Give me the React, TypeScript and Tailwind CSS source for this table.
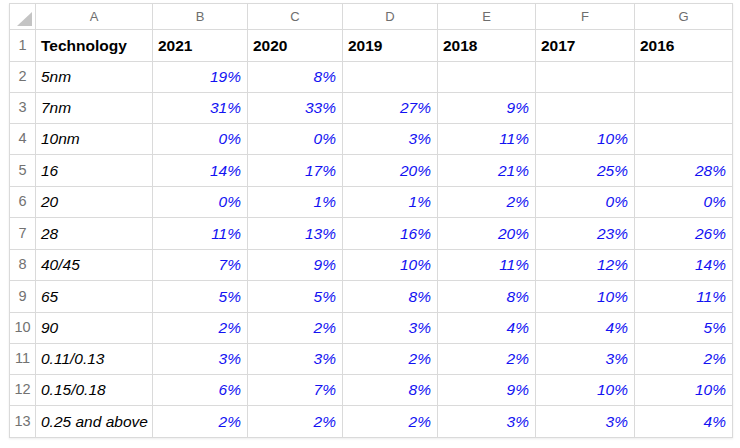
const cols = [
  { key: "A", w: "w-[117px]" },
  { key: "B", w: "w-[95px]" },
  { key: "C", w: "w-[95px]" },
  { key: "D", w: "w-[95px]" },
  { key: "E", w: "w-[98px]" },
  { key: "F", w: "w-[99px]" },
  { key: "G", w: "w-[98px]" },
];

const years = ["2021", "2020", "2019", "2018", "2017", "2016"];

const rows: [string, (number | null)[]][] = [
  ["5nm", [19, 8, null, null, null, null]],
  ["7nm", [31, 33, 27, 9, null, null]],
  ["10nm", [0, 0, 3, 11, 10, null]],
  ["16", [14, 17, 20, 21, 25, 28]],
  ["20", [0, 1, 1, 2, 0, 0]],
  ["28", [11, 13, 16, 20, 23, 26]],
  ["40/45", [7, 9, 10, 11, 12, 14]],
  ["65", [5, 5, 8, 8, 10, 11]],
  ["90", [2, 2, 3, 4, 4, 5]],
  ["0.11/0.13", [3, 3, 2, 2, 3, 2]],
  ["0.15/0.18", [6, 7, 8, 9, 10, 10]],
  ["0.25 and above", [2, 2, 2, 3, 3, 4]],
];

// row heights incl. bottom border, row 1 first
const heights = [
  "h-[32px]",
  "h-[31px]",
  "h-[31px]",
  "h-[31px]",
  "h-[32px]",
  "h-[31px]",
  "h-[32px]",
  "h-[31px]",
  "h-[32px]",
  "h-[31px]",
  "h-[31px]",
  "h-[31px]",
  "h-[32px]",
];

const cell = "border-r border-b border-[#dadada] flex items-center shrink-0 whitespace-nowrap";

function RowNum({ n, h }: { n: number; h: string }) {
  return (
    <div className={`${cell} ${h} w-[26px] justify-center text-[14.5px] text-[#727272]`}>
      {n}
    </div>
  );
}

export default function App() {
  return (
    <div
      className="w-[740px] h-[448px] bg-white pt-[3px] pl-[9px]"
      style={{ fontFamily: '"Liberation Sans", Arial, sans-serif' }}
    >
      <div className="w-fit border-t border-l border-[#dadada] shadow-[0_1px_2px_rgba(0,0,0,0.08)]">
        <div className="flex">
          <div className={`${cell} h-[26px] w-[26px] justify-end items-end pr-[3px] pb-[3px]`}>
            <svg width="15" height="14" viewBox="0 0 15 14">
              <polygon points="15,0 15,14 0,14" fill="#c4c4c4" />
            </svg>
          </div>
          {cols.map((c) => (
            <div
              key={c.key}
              className={`${cell} h-[26px] ${c.w} justify-center text-[13px] text-[#6e6e6e]`}
            >
              {c.key}
            </div>
          ))}
        </div>
        <div className="flex">
          <RowNum n={1} h={heights[0]} />
          <div className={`${cell} ${heights[0]} w-[117px] px-[5px] text-[15.5px] font-bold text-black`}>
            Technology
          </div>
          {years.map((y, i) => (
            <div
              key={y}
              className={`${cell} ${heights[0]} ${cols[i + 1].w} px-[5px] text-[15.5px] font-bold text-black`}
            >
              {y}
            </div>
          ))}
        </div>
        {rows.map(([label, vals], r) => (
          <div key={label} className="flex">
            <RowNum n={r + 2} h={heights[r + 1]} />
            <div className={`${cell} ${heights[r + 1]} w-[117px] pl-[5px] text-[15.5px] italic text-black`}>
              {label}
            </div>
            {vals.map((v, i) => (
              <div
                key={i}
                className={`${cell} ${heights[r + 1]} ${cols[i + 1].w} justify-end pr-[6px] text-[15.5px] italic text-[#1212f2]`}
              >
                {v === null ? "" : `${v}%`}
              </div>
            ))}
          </div>
        ))}
      </div>
    </div>
  );
}
